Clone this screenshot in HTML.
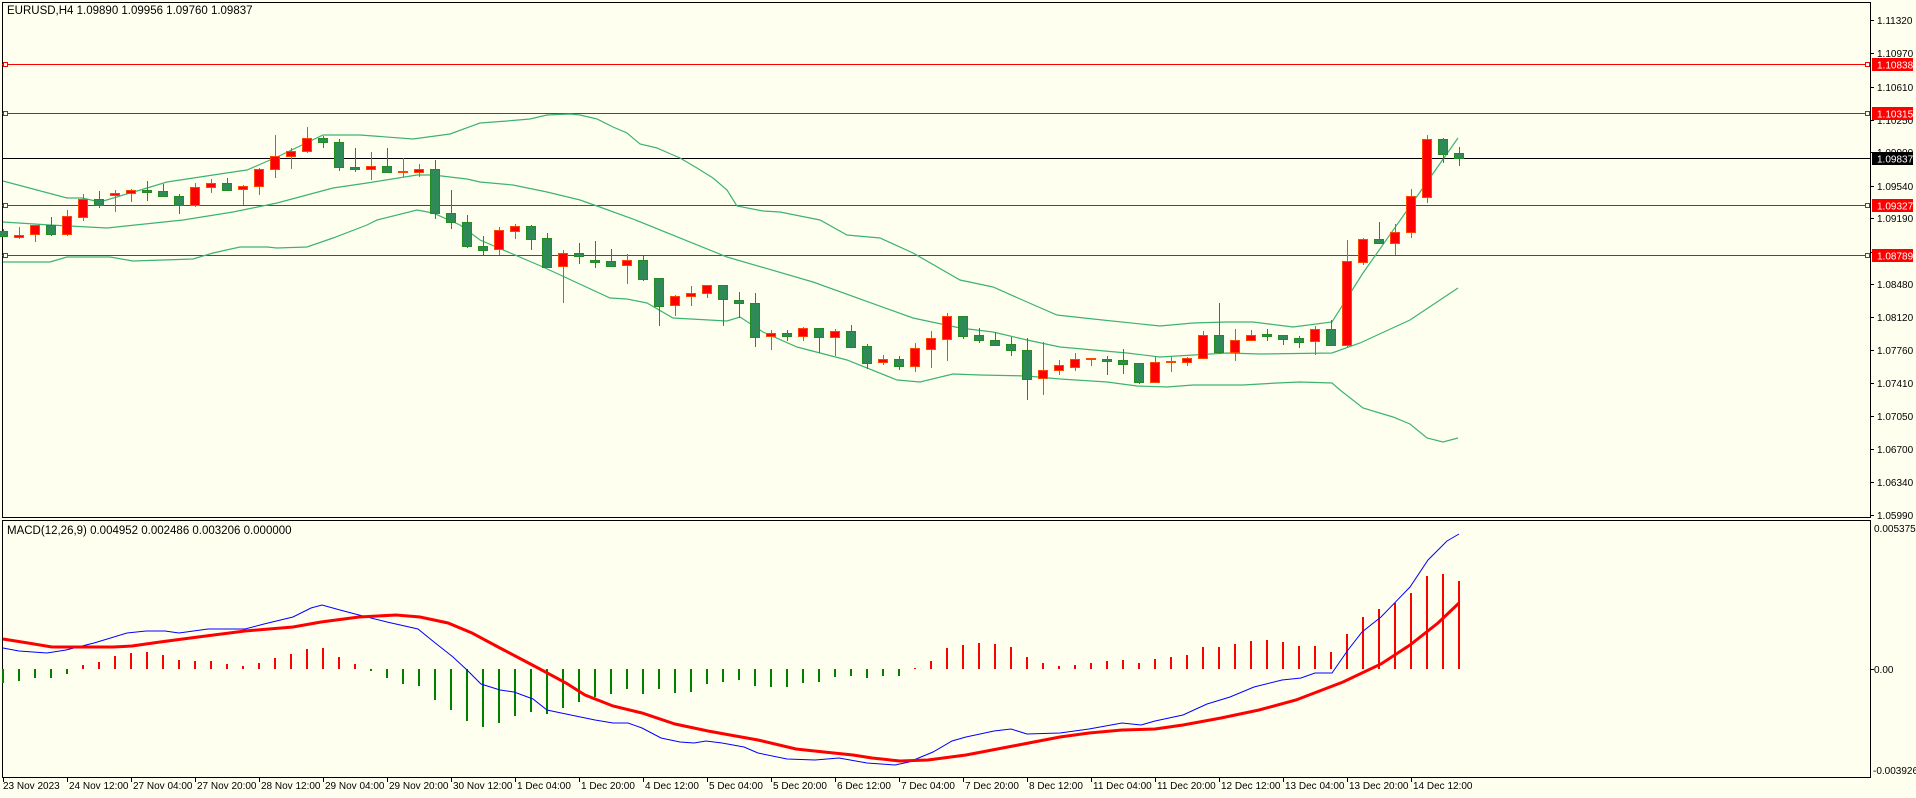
<!DOCTYPE html>
<html><head><meta charset="utf-8"><style>
html,body{margin:0;padding:0;background:#fffff0;}
svg{display:block;font-family:"Liberation Sans",sans-serif;font-size:10px;}
.tt{font-size:11.5px;}
</style></head><body>
<svg width="1916" height="798" viewBox="0 0 1916 798" xmlns="http://www.w3.org/2000/svg">
<rect width="1916" height="798" fill="#fffff0"/>
<g fill="none" stroke="#000" stroke-width="1">
<path d="M2.5 2.5H1870.5V517.5H2.5Z"/>
<path d="M2.5 520.5H1870.5V777.5H2.5Z"/>
</g>
<g stroke="#ff0000" stroke-width="1">
<line x1="2" y1="64.5" x2="1870" y2="64.5"/>
<line x1="2" y1="113.5" x2="1870" y2="113.5"/>
<line x1="2" y1="205.5" x2="1870" y2="205.5"/>
<line x1="2" y1="255.5" x2="1870" y2="255.5"/>
</g>
<g fill="#fffff0" stroke="#ff0000">
<rect x="3.5" y="62.5" width="4" height="4"/><rect x="3.5" y="111.5" width="4" height="4"/><rect x="3.5" y="203.5" width="4" height="4"/><rect x="3.5" y="253.5" width="4" height="4"/>
<rect x="1865.5" y="62.5" width="4" height="4"/><rect x="1865.5" y="111.5" width="4" height="4"/><rect x="1865.5" y="203.5" width="4" height="4"/><rect x="1865.5" y="253.5" width="4" height="4"/>
</g>
<line x1="2" y1="158.5" x2="1870" y2="158.5" stroke="#000"/>
<g fill="none" stroke="#3cb371" stroke-width="1.2">
<polyline points="3,181 67,198 82,198 100,202 167,182 233,172 247,170 277,157 323,135 360,135 413,139 450,134 480,123 507,121 530,119 547,115 570,114 580,115 597,119 613,127 627,133 640,144 657,148 673,155 680,158 697,168 713,178 727,190 737,206 763,211 780,212 820,220 847,235 880,238 913,253 960,280 993,287 1027,302 1057,315 1093,319 1160,326 1193,323 1227,322 1253,322 1293,327 1332,322 1363,273 1458,138"/>
<polyline points="3,222 50,225 107,228 183,220 233,212 277,203 333,188 367,183 417,175 433,175 467,179 480,182 513,185 547,192 580,200 597,206 633,219 727,257 813,282 913,318 960,328 993,332 1027,340 1060,347 1127,353 1160,357 1227,353 1260,354 1332,353 1360,343 1410,320 1458,288"/>
<polyline points="3,262 50,262 67,257 110,257 133,261 193,259 213,253 240,247 267,247 277,248 307,247 333,238 367,225 377,220 417,210 433,213 460,225 480,240 543,267 610,298 627,299 647,303 673,318 727,321 740,317 763,332 797,347 847,360 897,380 920,382 953,374 980,375 1027,376 1060,379 1107,382 1137,386 1167,387 1193,385 1243,385 1277,383 1300,382 1332,383 1340,390 1363,408 1393,417 1410,424 1427,438 1443,442 1458,438"/>
</g>
<g stroke-width="1">
<g stroke="#228b22" fill="#2e8b57">
<line x1="3.5" y1="229" x2="3.5" y2="237"/><rect x="-1.5" y="231.5" width="9" height="5"/>
<line x1="51.5" y1="217" x2="51.5" y2="236"/><rect x="46.5" y="225.5" width="9" height="9"/>
<line x1="99.5" y1="191" x2="99.5" y2="208"/><rect x="94.5" y="199.5" width="9" height="6"/>
<line x1="147.5" y1="181" x2="147.5" y2="201"/><rect x="142.5" y="190.5" width="9" height="2"/>
<line x1="163.5" y1="184" x2="163.5" y2="196"/><rect x="158.5" y="191.5" width="9" height="5"/>
<line x1="179.5" y1="194" x2="179.5" y2="214"/><rect x="174.5" y="196.5" width="9" height="9"/>
<line x1="227.5" y1="178" x2="227.5" y2="191"/><rect x="222.5" y="183.5" width="9" height="7"/>
<line x1="323.5" y1="136" x2="323.5" y2="148"/><rect x="318.5" y="138.5" width="9" height="4"/>
<line x1="339.5" y1="139" x2="339.5" y2="171"/><rect x="334.5" y="142.5" width="9" height="25"/>
<line x1="355.5" y1="148" x2="355.5" y2="172"/><rect x="350.5" y="167.5" width="9" height="2"/>
<line x1="387.5" y1="148" x2="387.5" y2="173"/><rect x="382.5" y="166.5" width="9" height="6"/>
<line x1="435.5" y1="160" x2="435.5" y2="219"/><rect x="430.5" y="169.5" width="9" height="44"/>
<line x1="451.5" y1="190" x2="451.5" y2="229"/><rect x="446.5" y="213.5" width="9" height="9"/>
<line x1="467.5" y1="215" x2="467.5" y2="248"/><rect x="462.5" y="222.5" width="9" height="24"/>
<line x1="483.5" y1="236" x2="483.5" y2="255"/><rect x="478.5" y="246.5" width="9" height="4"/>
<line x1="531.5" y1="225" x2="531.5" y2="250"/><rect x="526.5" y="226.5" width="9" height="13"/>
<line x1="547.5" y1="233" x2="547.5" y2="268"/><rect x="542.5" y="238.5" width="9" height="29"/>
<line x1="579.5" y1="243" x2="579.5" y2="264"/><rect x="574.5" y="253.5" width="9" height="3"/>
<line x1="595.5" y1="241" x2="595.5" y2="268"/><rect x="590.5" y="260.5" width="9" height="2"/>
<line x1="611.5" y1="249" x2="611.5" y2="267"/><rect x="606.5" y="261.5" width="9" height="5"/>
<line x1="643.5" y1="256" x2="643.5" y2="281"/><rect x="638.5" y="260.5" width="9" height="19"/>
<line x1="659.5" y1="278" x2="659.5" y2="326"/><rect x="654.5" y="278.5" width="9" height="28"/>
<line x1="723.5" y1="285" x2="723.5" y2="326"/><rect x="718.5" y="285.5" width="9" height="14"/>
<line x1="739.5" y1="292" x2="739.5" y2="318"/><rect x="734.5" y="300.5" width="9" height="3"/>
<line x1="755.5" y1="293" x2="755.5" y2="347"/><rect x="750.5" y="303.5" width="9" height="34"/>
<line x1="787.5" y1="330" x2="787.5" y2="341"/><rect x="782.5" y="333.5" width="9" height="3"/>
<line x1="819.5" y1="328" x2="819.5" y2="353"/><rect x="814.5" y="328.5" width="9" height="9"/>
<line x1="851.5" y1="325" x2="851.5" y2="348"/><rect x="846.5" y="331.5" width="9" height="16"/>
<line x1="867.5" y1="344" x2="867.5" y2="369"/><rect x="862.5" y="346.5" width="9" height="17"/>
<line x1="899.5" y1="356" x2="899.5" y2="370"/><rect x="894.5" y="359.5" width="9" height="7"/>
<line x1="963.5" y1="316" x2="963.5" y2="339"/><rect x="958.5" y="316.5" width="9" height="20"/>
<line x1="979.5" y1="328" x2="979.5" y2="343"/><rect x="974.5" y="335.5" width="9" height="5"/>
<line x1="995.5" y1="332" x2="995.5" y2="346"/><rect x="990.5" y="340.5" width="9" height="5"/>
<line x1="1011.5" y1="337" x2="1011.5" y2="356"/><rect x="1006.5" y="344.5" width="9" height="6"/>
<line x1="1027.5" y1="338" x2="1027.5" y2="400"/><rect x="1022.5" y="350.5" width="9" height="29"/>
<line x1="1107.5" y1="356" x2="1107.5" y2="375"/><rect x="1102.5" y="359.5" width="9" height="2"/>
<line x1="1123.5" y1="349" x2="1123.5" y2="374"/><rect x="1118.5" y="360.5" width="9" height="4"/>
<line x1="1139.5" y1="363" x2="1139.5" y2="384"/><rect x="1134.5" y="363.5" width="9" height="19"/>
<line x1="1219.5" y1="303" x2="1219.5" y2="354"/><rect x="1214.5" y="335.5" width="9" height="17"/>
<line x1="1267.5" y1="329" x2="1267.5" y2="341"/><rect x="1262.5" y="334.5" width="9" height="2"/>
<line x1="1283.5" y1="335" x2="1283.5" y2="345"/><rect x="1278.5" y="335.5" width="9" height="4"/>
<line x1="1299.5" y1="336" x2="1299.5" y2="348"/><rect x="1294.5" y="338.5" width="9" height="4"/>
<line x1="1331.5" y1="320" x2="1331.5" y2="346"/><rect x="1326.5" y="329.5" width="9" height="16"/>
<line x1="1379.5" y1="222" x2="1379.5" y2="244"/><rect x="1374.5" y="239.5" width="9" height="4"/>
<line x1="1443.5" y1="138" x2="1443.5" y2="163"/><rect x="1438.5" y="139.5" width="9" height="15"/>
<line x1="1459.5" y1="147" x2="1459.5" y2="166"/><rect x="1454.5" y="153.5" width="9" height="5"/>
</g>
<g stroke="#ff4500" fill="#ff0000">
<line x1="19.5" y1="227" x2="19.5" y2="239"/><rect x="14.5" y="235.5" width="9" height="2"/>
<line x1="35.5" y1="225" x2="35.5" y2="242"/><rect x="30.5" y="225.5" width="9" height="9"/>
<line x1="67.5" y1="210" x2="67.5" y2="236"/><rect x="62.5" y="216.5" width="9" height="18"/>
<line x1="83.5" y1="194" x2="83.5" y2="221"/><rect x="78.5" y="199.5" width="9" height="18"/>
<line x1="115.5" y1="190" x2="115.5" y2="212"/><rect x="110.5" y="193.5" width="9" height="2"/>
<line x1="131.5" y1="189" x2="131.5" y2="202"/><rect x="126.5" y="190.5" width="9" height="3"/>
<line x1="195.5" y1="183" x2="195.5" y2="207"/><rect x="190.5" y="187.5" width="9" height="18"/>
<line x1="211.5" y1="179" x2="211.5" y2="193"/><rect x="206.5" y="183.5" width="9" height="4"/>
<line x1="243.5" y1="185" x2="243.5" y2="205"/><rect x="238.5" y="186.5" width="9" height="3"/>
<line x1="259.5" y1="168" x2="259.5" y2="195"/><rect x="254.5" y="169.5" width="9" height="17"/>
<line x1="275.5" y1="135" x2="275.5" y2="178"/><rect x="270.5" y="156.5" width="9" height="13"/>
<line x1="291.5" y1="148" x2="291.5" y2="169"/><rect x="286.5" y="151.5" width="9" height="5"/>
<line x1="307.5" y1="127" x2="307.5" y2="153"/><rect x="302.5" y="138.5" width="9" height="13"/>
<line x1="371.5" y1="152" x2="371.5" y2="180"/><rect x="366.5" y="166.5" width="9" height="3"/>
<line x1="403.5" y1="158" x2="403.5" y2="177"/><rect x="398.5" y="171.5" width="9" height="1"/>
<line x1="419.5" y1="164" x2="419.5" y2="177"/><rect x="414.5" y="169.5" width="9" height="3"/>
<line x1="499.5" y1="227" x2="499.5" y2="255"/><rect x="494.5" y="230.5" width="9" height="19"/>
<line x1="515.5" y1="224" x2="515.5" y2="239"/><rect x="510.5" y="226.5" width="9" height="5"/>
<line x1="563.5" y1="250" x2="563.5" y2="303"/><rect x="558.5" y="253.5" width="9" height="13"/>
<line x1="627.5" y1="254" x2="627.5" y2="284"/><rect x="622.5" y="260.5" width="9" height="5"/>
<line x1="675.5" y1="295" x2="675.5" y2="316"/><rect x="670.5" y="296.5" width="9" height="9"/>
<line x1="691.5" y1="286" x2="691.5" y2="306"/><rect x="686.5" y="293.5" width="9" height="3"/>
<line x1="707.5" y1="285" x2="707.5" y2="298"/><rect x="702.5" y="285.5" width="9" height="8"/>
<line x1="771.5" y1="330" x2="771.5" y2="350"/><rect x="766.5" y="333.5" width="9" height="3"/>
<line x1="803.5" y1="327" x2="803.5" y2="341"/><rect x="798.5" y="328.5" width="9" height="8"/>
<line x1="835.5" y1="329" x2="835.5" y2="356"/><rect x="830.5" y="331.5" width="9" height="6"/>
<line x1="883.5" y1="355" x2="883.5" y2="365"/><rect x="878.5" y="359.5" width="9" height="3"/>
<line x1="915.5" y1="343" x2="915.5" y2="372"/><rect x="910.5" y="348.5" width="9" height="18"/>
<line x1="931.5" y1="331" x2="931.5" y2="368"/><rect x="926.5" y="338.5" width="9" height="11"/>
<line x1="947.5" y1="313" x2="947.5" y2="361"/><rect x="942.5" y="316.5" width="9" height="23"/>
<line x1="1043.5" y1="342" x2="1043.5" y2="395"/><rect x="1038.5" y="370.5" width="9" height="8"/>
<line x1="1059.5" y1="360" x2="1059.5" y2="375"/><rect x="1054.5" y="365.5" width="9" height="5"/>
<line x1="1075.5" y1="353" x2="1075.5" y2="371"/><rect x="1070.5" y="359.5" width="9" height="8"/>
<line x1="1091.5" y1="358" x2="1091.5" y2="366"/><rect x="1086.5" y="358.5" width="9" height="1"/>
<line x1="1155.5" y1="357" x2="1155.5" y2="383"/><rect x="1150.5" y="362.5" width="9" height="20"/>
<line x1="1171.5" y1="357" x2="1171.5" y2="372"/><rect x="1166.5" y="361.5" width="9" height="1"/>
<line x1="1187.5" y1="357" x2="1187.5" y2="366"/><rect x="1182.5" y="358.5" width="9" height="4"/>
<line x1="1203.5" y1="331" x2="1203.5" y2="358"/><rect x="1198.5" y="335.5" width="9" height="23"/>
<line x1="1235.5" y1="329" x2="1235.5" y2="361"/><rect x="1230.5" y="340.5" width="9" height="12"/>
<line x1="1251.5" y1="330" x2="1251.5" y2="341"/><rect x="1246.5" y="335.5" width="9" height="5"/>
<line x1="1315.5" y1="326" x2="1315.5" y2="355"/><rect x="1310.5" y="329.5" width="9" height="12"/>
<line x1="1347.5" y1="240" x2="1347.5" y2="347"/><rect x="1342.5" y="261.5" width="9" height="84"/>
<line x1="1363.5" y1="238" x2="1363.5" y2="265"/><rect x="1358.5" y="239.5" width="9" height="23"/>
<line x1="1395.5" y1="224" x2="1395.5" y2="255"/><rect x="1390.5" y="232.5" width="9" height="11"/>
<line x1="1411.5" y1="189" x2="1411.5" y2="238"/><rect x="1406.5" y="196.5" width="9" height="36"/>
<line x1="1427.5" y1="135" x2="1427.5" y2="203"/><rect x="1422.5" y="139.5" width="9" height="58"/>
</g>
</g>
<text class="tt" x="7" y="14" fill="#000">EURUSD,H4  1.09890 1.09956 1.09760 1.09837</text>
<g stroke="#000"><line x1="1870" y1="20.5" x2="1874" y2="20.5"/><line x1="1870" y1="53.5" x2="1874" y2="53.5"/><line x1="1870" y1="87.5" x2="1874" y2="87.5"/><line x1="1870" y1="120.5" x2="1874" y2="120.5"/><line x1="1870" y1="152.5" x2="1874" y2="152.5"/><line x1="1870" y1="186.5" x2="1874" y2="186.5"/><line x1="1870" y1="218.5" x2="1874" y2="218.5"/><line x1="1870" y1="252.5" x2="1874" y2="252.5"/><line x1="1870" y1="284.5" x2="1874" y2="284.5"/><line x1="1870" y1="317.5" x2="1874" y2="317.5"/><line x1="1870" y1="350.5" x2="1874" y2="350.5"/><line x1="1870" y1="383.5" x2="1874" y2="383.5"/><line x1="1870" y1="416.5" x2="1874" y2="416.5"/><line x1="1870" y1="449.5" x2="1874" y2="449.5"/><line x1="1870" y1="482.5" x2="1874" y2="482.5"/><line x1="1870" y1="515.5" x2="1874" y2="515.5"/><line x1="1870" y1="669.5" x2="1874" y2="669.5"/></g>
<g fill="#000">
<text x="1877" y="24">1.11320</text><text x="1877" y="57">1.10970</text><text x="1877" y="91">1.10610</text><text x="1877" y="124">1.10250</text><text x="1877" y="156">1.09900</text><text x="1877" y="190">1.09540</text><text x="1877" y="222">1.09190</text><text x="1877" y="256">1.08830</text><text x="1877" y="288">1.08480</text><text x="1877" y="321">1.08120</text><text x="1877" y="354">1.07760</text><text x="1877" y="387">1.07410</text><text x="1877" y="420">1.07050</text><text x="1877" y="453">1.06700</text><text x="1877" y="486">1.06340</text><text x="1877" y="519">1.05990</text>
<text x="1874" y="532">0.005375</text><text x="1874" y="673">0.00</text><text x="1873" y="774">-0.003926</text>
</g>
<rect x="1872" y="58" width="41" height="13" fill="#ff0000"/><text x="1877" y="68.5" fill="#fff">1.10838</text>
<rect x="1872" y="107" width="41" height="13" fill="#ff0000"/><text x="1877" y="117.5" fill="#fff">1.10315</text>
<rect x="1872" y="152" width="41" height="13" fill="#000"/><text x="1877" y="162.5" fill="#fff">1.09837</text>
<rect x="1872" y="199" width="41" height="13" fill="#ff0000"/><text x="1877" y="209.5" fill="#fff">1.09327</text>
<rect x="1872" y="249" width="41" height="13" fill="#ff0000"/><text x="1877" y="259.5" fill="#fff">1.08789</text>
<g stroke="#008000" stroke-width="2">
<path d="M3 669V683M19 669V681M35 669V678M51 669V678M67 669V674M371 669V671M387 669V678M403 669V684M419 669V686M435 669V700M451 669V710M467 669V721M483 669V727M499 669V723M515 669V716M531 669V712M547 669V714M563 669V708M579 669V702M595 669V697M611 669V694M627 669V689M643 669V694M659 669V689M675 669V693M691 669V692M707 669V684M723 669V682M739 669V680M755 669V686M771 669V687M787 669V687M803 669V683M819 669V682M835 669V677M851 669V676M867 669V678M883 669V676M899 669V676"/>
</g>
<g stroke="#ff0000" stroke-width="2">
<path d="M83 669V665M99 669V662M115 669V656M131 669V653M147 669V652M163 669V655M179 669V660M195 669V661M211 669V661M227 669V664M243 669V666M259 669V663M275 669V658M291 669V654M307 669V649M323 669V648M339 669V657M355 669V664M915 669V668M931 669V661M947 669V648M963 669V645M979 669V643M995 669V644M1011 669V647M1027 669V657M1043 669V663M1059 669V666M1075 669V665M1091 669V663M1107 669V661M1123 669V660M1139 669V663M1155 669V659M1171 669V657M1187 669V655M1203 669V647M1219 669V647M1235 669V644M1251 669V641M1267 669V640M1283 669V642M1299 669V646M1315 669V646M1331 669V652M1347 669V634M1363 669V617M1379 669V609M1395 669V603M1411 669V593M1427 669V576M1443 669V574M1459 669V581"/>
</g>
<polyline fill="none" stroke="#0000ff" stroke-width="1" points="3,648 19,651 47,653 66,650 94,643 127,633 146,631 165,631 179,633 208,629 245,629 264,624 293,617 311,608 322,605 340,610 359,615 387,622 418,629 434,642 453,657 467,670 481,684 500,690 514,692 533,699 547,710 566,714 595,720 613,723 628,723 642,728 661,738 680,742 694,743 706,741 722,743 744,747 758,753 787,759 815,760 839,758 867,763 895,765 909,762 933,752 952,741 966,737 994,731 1011,729 1027,734 1060,733 1089,729 1122,723 1141,725 1155,721 1183,715 1207,704 1230,697 1254,687 1282,680 1301,678 1315,673 1332,673 1348,650 1362,632 1381,617 1410,587 1428,560 1447,541 1459,534"/>
<polyline fill="none" stroke="#ff0000" stroke-width="3" points="3,639 28,643 52,647 80,647 113,647 132,646 160,642 198,637 245,631 293,627 321,622 359,617 396,615 420,617 448,623 472,633 500,648 519,658 538,668 566,683 585,695 613,706 642,713 675,724 708,731 730,735 758,740 796,749 824,752 853,755 872,758 900,761 928,760 966,755 1013,746 1060,737 1089,733 1122,730 1155,729 1183,725 1221,718 1259,710 1296,700 1343,682 1381,664 1410,645 1438,623 1459,603"/>
<text class="tt" x="7" y="534" fill="#000">MACD(12,26,9) 0.004952 0.002486 0.003206 0.000000</text>
<g stroke="#000"><path d="M3.5 777V782M67.5 777V782M131.5 777V782M195.5 777V782M259.5 777V782M323.5 777V782M387.5 777V782M451.5 777V782M515.5 777V782M579.5 777V782M643.5 777V782M707.5 777V782M771.5 777V782M835.5 777V782M899.5 777V782M963.5 777V782M1027.5 777V782M1091.5 777V782M1155.5 777V782M1219.5 777V782M1283.5 777V782M1347.5 777V782M1411.5 777V782"/></g>
<g fill="#000">
<text x="3" y="789">23 Nov 2023</text><text x="69" y="789">24 Nov 12:00</text><text x="133" y="789">27 Nov 04:00</text><text x="197" y="789">27 Nov 20:00</text><text x="261" y="789">28 Nov 12:00</text><text x="325" y="789">29 Nov 04:00</text><text x="389" y="789">29 Nov 20:00</text><text x="453" y="789">30 Nov 12:00</text><text x="517" y="789">1 Dec 04:00</text><text x="581" y="789">1 Dec 20:00</text><text x="645" y="789">4 Dec 12:00</text><text x="709" y="789">5 Dec 04:00</text><text x="773" y="789">5 Dec 20:00</text><text x="837" y="789">6 Dec 12:00</text><text x="901" y="789">7 Dec 04:00</text><text x="965" y="789">7 Dec 20:00</text><text x="1029" y="789">8 Dec 12:00</text><text x="1093" y="789">11 Dec 04:00</text><text x="1157" y="789">11 Dec 20:00</text><text x="1221" y="789">12 Dec 12:00</text><text x="1285" y="789">13 Dec 04:00</text><text x="1349" y="789">13 Dec 20:00</text><text x="1413" y="789">14 Dec 12:00</text>
</g>
</svg>
</body></html>
